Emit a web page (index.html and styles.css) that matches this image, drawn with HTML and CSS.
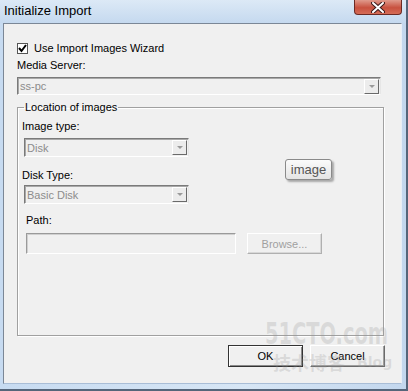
FILE: index.html
```html
<!DOCTYPE html>
<html lang="en">
<head>
  <meta charset="UTF-8">
  <title>Initialize Import</title>
  <link rel="stylesheet" href="styles.css">
</head>
<body>
<div class="window">
  <div class="titlebar">
    <span class="title">Initialize Import</span>
    <span class="close">
      <svg width="14" height="11" viewBox="0 0 14 11">
        <path d="M2 1 L12 10 M12 1 L2 10" stroke="#3a1a1a" stroke-width="4" stroke-linecap="round"/>
        <path d="M2 1 L12 10 M12 1 L2 10" stroke="#fff" stroke-width="2" stroke-linecap="round"/>
      </svg>
    </span>
  </div>

  <div class="client">
    <label class="check">
      <span class="box">
        <svg width="9" height="9" viewBox="0 0 9 9">
          <path d="M1 4 L3.5 7 L8 1" fill="none" stroke="#000" stroke-width="2"/>
        </svg>
      </span>
      Use Import Images Wizard
    </label>

    <div class="field-label">Media Server:</div>
    <div class="combo server">
      <span class="value">ss-pc</span>
      <span class="arrow"></span>
    </div>

    <fieldset class="group">
      <legend>Location of images</legend>

      <div class="field-label">Image type:</div>
      <div class="combo small">
        <span class="value">Disk</span>
        <span class="arrow"></span>
      </div>

      <div class="field-label disk-label">Disk Type:</div>
      <div class="combo small disk-combo">
        <span class="value">Basic Disk</span>
        <span class="arrow"></span>
      </div>

      <div class="field-label path-label">Path:</div>
      <div class="path-row">
        <div class="path-input"></div>
        <div class="btn disabled">Browse...</div>
      </div>
    </fieldset>

    <div class="buttons">
      <div class="btn default">OK</div>
      <div class="btn">Cancel</div>
    </div>

    <div class="tooltip">image</div>

    <div class="watermark">
      <span class="wm-site">51CTO.com</span>
      <span class="wm-blog">技术博客 <em>Blog</em></span>
    </div>
  </div>
</div>
</body>
</html>
```

FILE: styles.css
```css
body {
  margin: 0;
  background: #fff;
  font-family: "Liberation Sans", Arial, sans-serif;
  font-size: 11px;
  color: #000;
}
.window {
  width: 408px;
  height: 391px;
  box-sizing: border-box;
  background: linear-gradient(90deg, #c7dbf1, #d7e6f5 60%, #c3d7ee);
  border-right: 2px solid #55657a;
  border-bottom: 2px solid #55657a;
  overflow: hidden;
}
.titlebar {
  height: 23px;
  display: flex;
  justify-content: space-between;
  align-items: flex-start;
  background: linear-gradient(180deg, #dce9f6, #c5d9ef);
}
.title {
  font-size: 13px;
  line-height: 22px;
  padding-left: 4px;
}
.close {
  width: 46px;
  height: 14px;
  margin-right: 4px;
  display: flex;
  justify-content: center;
  align-items: center;
  border: 1px solid #6b2a24;
  border-top: none;
  border-radius: 0 0 4px 4px;
  background: linear-gradient(180deg, #e09a8c, #c8513f 55%, #d56c56);
}
.client {
  position: relative;
  height: 361px;
  margin: 0 4px 0 3px;
  border: 1px solid #7b8796;
  border-bottom-color: #a9bdd6;
  border-right-color: #e8eef6;
  background: #f0f0f0;
  padding: 17px 0 0 13px;
  box-sizing: border-box;
  overflow: hidden;
}
.check {
  display: flex;
  align-items: center;
  gap: 6px;
  height: 14px;
  line-height: 14px;
}
.box {
  width: 11px;
  height: 11px;
  box-sizing: border-box;
  border: 1px solid #555;
  background: #fff;
  display: flex;
  align-items: center;
  justify-content: center;
}
.field-label {
  height: 14px;
  line-height: 14px;
  margin-top: 3px;
}
.combo {
  display: flex;
  align-items: center;
  justify-content: space-between;
  box-sizing: border-box;
  height: 18px;
  margin-top: 5px;
  border: 1px solid;
  border-color: #7a7a7a #e6e6e6 #fff #7a7a7a;
  box-shadow: inset 1px 1px 0 #a8a8a8;
  color: #8c8c8c;
  padding-left: 2px;
}
.combo.server {
  width: 364px;
}
.combo.small {
  width: 165px;
  height: 19px;
  margin-left: 2px;
}
.arrow {
  width: 15px;
  height: 15px;
  margin-right: 1px;
  box-sizing: border-box;
  border: 1px solid #fff;
  border-right-color: #6a6a6a;
  border-bottom-color: #6a6a6a;
  background: #ececec;
  position: relative;
}
.arrow::after {
  content: "";
  position: absolute;
  left: 4px;
  top: 5px;
  border-left: 3px solid transparent;
  border-right: 3px solid transparent;
  border-top: 3px solid #9a9a9a;
}
.group {
  width: 367px;
  height: 236px;
  box-sizing: border-box;
  margin: 5px 0 0;
  padding: 2px 4px 0;
  border: 1px solid #a0a0a0;
  box-shadow: 1px 1px 0 #fff, inset 1px 1px 0 #fff;
  min-width: 0;
}
.group legend {
  padding: 0 1px;
  margin-left: 2px;
  line-height: 14px;
}
.disk-label {
  margin-top: 11px;
}
.disk-combo {
  margin-top: 3px;
}
.path-label {
  margin-top: 9px;
  padding-left: 4px;
}
.path-row {
  display: flex;
  gap: 11px;
  margin-top: 6px;
  padding-left: 4px;
}
.path-input {
  width: 210px;
  height: 21px;
  box-sizing: border-box;
  border: 1px solid;
  border-color: #9a9a9a #fff #fff #9a9a9a;
  box-shadow: inset 1px 1px 0 #d0d0d0;
}
.btn {
  width: 75px;
  height: 22px;
  box-sizing: border-box;
  display: flex;
  align-items: center;
  justify-content: center;
  border: 1px solid;
  border-color: #fff #6a6a6a #6a6a6a #fff;
  box-shadow: inset -1px -1px 0 #a0a0a0;
  background: #f0f0f0;
  color: #000;
}
.btn.disabled {
  height: 21px;
  color: #a0a0a0;
  border-color: #fff #b0b0b0 #b0b0b0 #fff;
  box-shadow: inset -1px -1px 0 #d8d8d8;
}
.btn.default {
  border-color: #333;
  box-shadow: inset 1px 1px 0 #fff, inset -1px -1px 0 #8a8a8a;
}
.buttons {
  display: flex;
  gap: 7px;
  justify-content: flex-end;
  margin: 9px 16px 0 0;
}
.tooltip {
  position: absolute;
  left: 281px;
  top: 135px;
  width: 47px;
  height: 21px;
  box-sizing: border-box;
  display: flex;
  align-items: center;
  justify-content: center;
  border: 1px solid #8a8a8a;
  border-radius: 3px;
  background: linear-gradient(180deg, #fbfbfb, #e4e4e4);
  box-shadow: 2px 2px 2px rgba(0,0,0,0.3);
  color: #555;
  font-size: 13px;
}
.watermark {
  position: absolute;
  left: 261px;
  top: 294px;
  width: 130px;
  pointer-events: none;
  color: rgba(150,150,150,0.25);
  font-weight: bold;
}
.wm-site {
  display: block;
  font-family: "DejaVu Sans Condensed", "DejaVu Sans", sans-serif;
  font-size: 30px;
  line-height: 32px;
  transform: scaleX(0.72);
  transform-origin: left;
  white-space: nowrap;
}
.wm-blog {
  display: block;
  font-family: "Noto Sans CJK SC", sans-serif;
  font-size: 18px;
  line-height: 24px;
  padding-left: 8px;
  white-space: nowrap;
}
.wm-blog em {
  font-style: normal;
  font-size: 14px;
  font-family: "DejaVu Sans", sans-serif;
  vertical-align: 3px;
  padding-left: 8px;
}
```
